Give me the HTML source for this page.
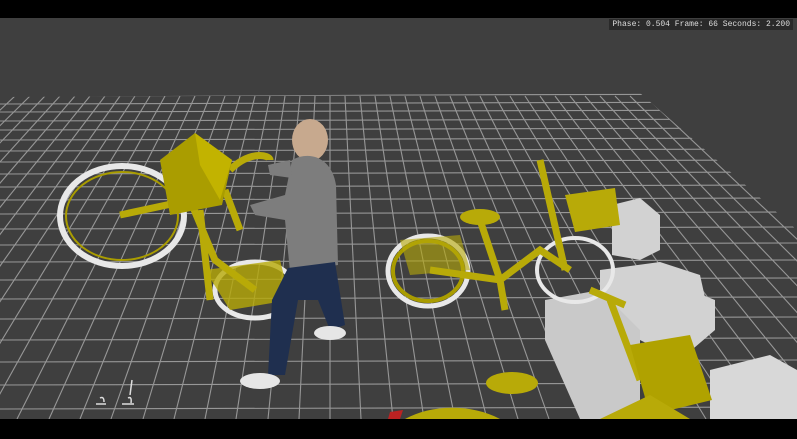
<!DOCTYPE html>
<html><head><meta charset="utf-8"><style>
html,body{margin:0;padding:0;background:#000}
#w{position:relative;width:797px;height:439px;overflow:hidden;background:#3f3f3f}
.bar{position:absolute;left:0;width:797px;background:#000}
#hud{position:absolute;right:4px;top:19px;font:8px "Liberation Mono",monospace;color:#ddd;background:#2a2a2a;padding:1px 3px}
</style></head><body><div id="w">
<svg width="797" height="439" style="position:absolute;left:0;top:0">
<defs><clipPath id="g"><polygon points="0,97 640,93 797,230 797,439 0,439"/></clipPath></defs>
<g clip-path="url(#g)" stroke="#bdbdbd" stroke-width="1.1" opacity="0.7">
<g id="h">
<line x1="0" x2="797" y1="96" y2="94"/><line x1="0" x2="797" y1="104" y2="102"/><line x1="0" x2="797" y1="112" y2="110"/><line x1="0" x2="797" y1="121" y2="119"/><line x1="0" x2="797" y1="130" y2="128"/><line x1="0" x2="797" y1="140" y2="138"/><line x1="0" x2="797" y1="151" y2="149"/><line x1="0" x2="797" y1="162" y2="160"/><line x1="0" x2="797" y1="174" y2="172"/><line x1="0" x2="797" y1="187" y2="185"/><line x1="0" x2="797" y1="200" y2="198"/><line x1="0" x2="797" y1="214" y2="212"/><line x1="0" x2="797" y1="229" y2="227"/><line x1="0" x2="797" y1="245" y2="243"/><line x1="0" x2="797" y1="262" y2="260"/><line x1="0" x2="797" y1="280" y2="278"/><line x1="0" x2="797" y1="299" y2="297"/><line x1="0" x2="797" y1="319" y2="317"/><line x1="0" x2="797" y1="340" y2="338"/><line x1="0" x2="797" y1="362" y2="360"/><line x1="0" x2="797" y1="385" y2="383"/><line x1="0" x2="797" y1="409" y2="407"/>
</g>
<g>
<line x1="-300" y1="96" x2="-987" y2="419"/><line x1="-270" y1="96" x2="-925" y2="419"/><line x1="-240" y1="96" x2="-862" y2="419"/><line x1="-210" y1="96" x2="-799" y2="419"/><line x1="-180" y1="96" x2="-736" y2="419"/><line x1="-150" y1="96" x2="-673" y2="419"/><line x1="-120" y1="96" x2="-611" y2="419"/><line x1="-90" y1="96" x2="-548" y2="419"/><line x1="-60" y1="96" x2="-485" y2="419"/><line x1="-30" y1="96" x2="-422" y2="419"/>
<line x1="0" y1="96" x2="-360" y2="419"/><line x1="15" y1="96" x2="-328" y2="419"/><line x1="30" y1="96" x2="-297" y2="419"/><line x1="45" y1="96" x2="-265" y2="419"/><line x1="60" y1="96" x2="-234" y2="419"/><line x1="75" y1="96" x2="-203" y2="419"/><line x1="90" y1="96" x2="-171" y2="419"/><line x1="105" y1="96" x2="-140" y2="419"/><line x1="120" y1="96" x2="-108" y2="419"/><line x1="135" y1="96" x2="-77" y2="419"/><line x1="150" y1="96" x2="-46" y2="419"/><line x1="165" y1="96" x2="-14" y2="419"/><line x1="180" y1="96" x2="17" y2="419"/><line x1="195" y1="96" x2="49" y2="419"/><line x1="210" y1="96" x2="80" y2="419"/><line x1="225" y1="96" x2="111" y2="419"/><line x1="240" y1="96" x2="143" y2="419"/><line x1="255" y1="96" x2="174" y2="419"/><line x1="270" y1="96" x2="205" y2="419"/><line x1="285" y1="96" x2="236" y2="419"/><line x1="300" y1="96" x2="268" y2="419"/><line x1="315" y1="96" x2="299" y2="419"/><line x1="330" y1="96" x2="330" y2="419"/><line x1="345" y1="96" x2="361" y2="419"/><line x1="360" y1="96" x2="393" y2="419"/><line x1="375" y1="96" x2="424" y2="419"/><line x1="390" y1="96" x2="455" y2="419"/><line x1="405" y1="96" x2="487" y2="419"/><line x1="420" y1="96" x2="518" y2="419"/><line x1="435" y1="96" x2="549" y2="419"/><line x1="450" y1="96" x2="581" y2="419"/><line x1="465" y1="96" x2="612" y2="419"/><line x1="480" y1="96" x2="643" y2="419"/><line x1="495" y1="96" x2="675" y2="419"/><line x1="510" y1="96" x2="706" y2="419"/><line x1="525" y1="96" x2="737" y2="419"/><line x1="540" y1="96" x2="769" y2="419"/><line x1="555" y1="96" x2="800" y2="419"/><line x1="570" y1="96" x2="831" y2="419"/><line x1="585" y1="96" x2="863" y2="419"/><line x1="600" y1="96" x2="894" y2="419"/><line x1="615" y1="96" x2="925" y2="419"/><line x1="630" y1="96" x2="957" y2="419"/><line x1="645" y1="96" x2="988" y2="419"/>
</g></g>
<g fill="#d2d2d2">
<polygon points="612,205 640,198 660,215 660,250 640,260 612,255"/>
<polygon points="600,270 660,262 700,275 710,320 650,340 600,330"/>
<polygon points="545,300 600,290 640,330 640,419 580,419 545,340" fill="#c9c9c9"/>
<polygon points="640,300 690,290 715,300 715,330 680,360 640,340"/>
<polygon points="710,370 770,355 797,370 797,419 710,419" fill="#d8d8d8"/>
</g>
<g fill="none">
<ellipse cx="122" cy="216" rx="62" ry="50" stroke="#e8e8e8" stroke-width="6"/>
<ellipse cx="122" cy="216" rx="56" ry="44" stroke="#a99c00" stroke-width="2"/>
<ellipse cx="255" cy="290" rx="40" ry="28" stroke="#e8e8e8" stroke-width="5"/>
<path d="M120 215 L190 200 L215 260 L255 290 M200 210 L210 300 M230 170 C250 150 270 155 270 160 M225 190 L240 230" stroke="#b8aa08" stroke-width="7"/>
</g>
<polygon points="160,160 195,133 232,160 222,205 170,215" fill="#aa9d00"/>
<polygon points="195,133 232,160 220,200 200,165" fill="#c2b300"/>
<polygon points="205,270 280,260 290,300 230,310" fill="#b8aa08" opacity=".8"/>
<ellipse cx="310" cy="140" rx="18" ry="21" fill="#c7a98e"/>
<path d="M292 160 C310 150 332 158 336 185 L338 265 L290 272 L285 220 L255 215 L250 205 L285 195 Z" fill="#7d7d7d"/>
<path d="M290 160 L268 165 L270 175 L292 178 Z" fill="#7d7d7d"/>
<path d="M288 268 L335 262 L345 325 L330 330 L318 300 L298 300 L285 375 L268 375 L272 300 Z" fill="#1f2f4f"/>
<ellipse cx="330" cy="333" rx="16" ry="7" fill="#e6e6e6"/>
<ellipse cx="260" cy="381" rx="20" ry="8" fill="#e6e6e6"/>
<g fill="none">
<ellipse cx="428" cy="271" rx="40" ry="35" stroke="#e8e8e8" stroke-width="5"/>
<ellipse cx="428" cy="271" rx="35" ry="30" stroke="#a99c00" stroke-width="4"/>
<ellipse cx="575" cy="270" rx="38" ry="32" stroke="#e8e8e8" stroke-width="4"/>
<path d="M430 270 L500 280 L540 250 L570 270 M480 220 L500 280 M540 160 L565 270 M500 280 L505 310" stroke="#b8aa08" stroke-width="7"/>
</g>
<ellipse cx="480" cy="217" rx="20" ry="8" fill="#b8aa08"/>
<polygon points="565,195 615,188 620,225 575,232" fill="#b8aa08"/>
<polygon points="400,240 460,235 470,270 410,275" fill="#b8aa08" opacity=".6"/>
<path d="M610 300 L640 380 M590 290 L625 305" stroke="#b8aa08" stroke-width="7" fill="none"/>
<polygon points="630,345 690,335 712,400 650,415" fill="#b0a200"/>
<ellipse cx="512" cy="383" rx="26" ry="11" fill="#b8aa08"/>
<path d="M405 419 C430 405 470 403 500 419 Z M600 419 L650 395 L690 419 Z" fill="#b8aa08"/>
<path d="M390 412 L403 410 L400 419 L388 419Z" fill="#b22"/>
<g stroke="#ddd" stroke-width="1.5" fill="none"><path d="M96 404 l10 0 M100 398 q4 -2 4 4 M122 404 l12 0 M128 398 q4 -2 3 5 M132 380 l-2 15"/></g>
</svg>
<div class="bar" style="top:0;height:18px"></div>
<div class="bar" style="top:419px;height:20px"></div>
<div id="hud">Phase: 0.504 Frame: 66 Seconds: 2.200</div>
</div></body></html>
